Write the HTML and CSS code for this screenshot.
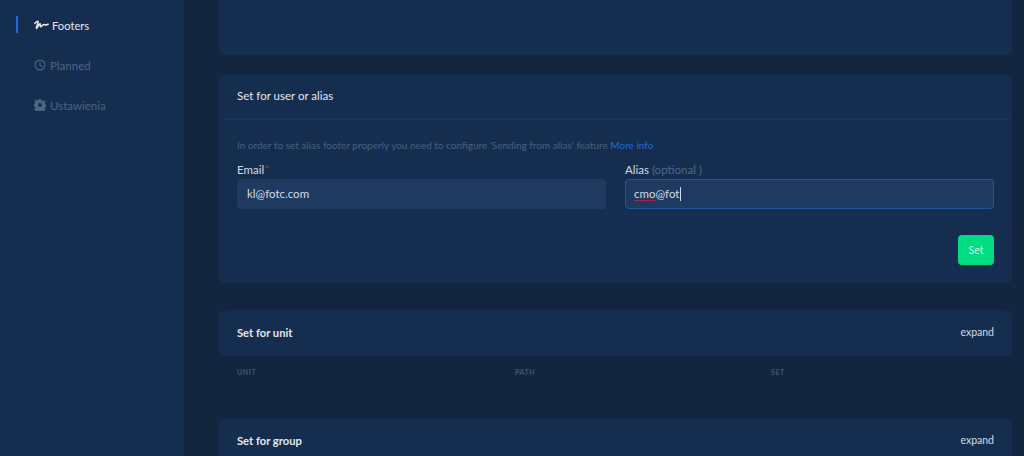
FILE: index.html
```html
<!DOCTYPE html>
<html lang="en">
<head>
<meta charset="utf-8">
<title>Footers</title>
<link rel="stylesheet" href="styles.css">
</head>
<body>
<aside class="sidebar">
  <nav class="nav">
    <a class="nav-item active">
      <svg class="icon squiggle" viewBox="0 0 16 10" width="15" height="10"><path d="M1 3.2C2.2 1.4 4 .8 4.4 1.5 4.9 2.4 2.2 6.8 2.6 8.6 3.6 8.6 5.2 3.8 6.4 3.6 7.2 3.6 6.2 6.6 7 6.9 8.2 7.2 9 4.2 10.4 4.4 11.6 4.6 12.6 5.6 15 4.2" fill="none" stroke="currentColor" stroke-width="1.7" stroke-linecap="round" stroke-linejoin="round"/></svg>
      <span>Footers</span>
    </a>
    <a class="nav-item">
      <svg class="icon" viewBox="0 0 12 12" width="12" height="12"><circle cx="6" cy="6" r="4.9" fill="none" stroke="currentColor" stroke-width="1.2"/><path d="M6 3v3.2l2.1 1.2" fill="none" stroke="currentColor" stroke-width="1.1" stroke-linecap="round"/></svg>
      <span>Planned</span>
    </a>
    <a class="nav-item">
      <svg class="icon" viewBox="0 0 24 24" width="12" height="12"><path fill="currentColor" fill-rule="evenodd" d="M9.6 0h4.8l.7 3.4 1.9.8 2.9-1.9 3.4 3.4-1.9 2.9.8 1.9 3.3.7v4.6l-3.3.7-.8 1.9 1.9 2.9-3.4 3.4-2.9-1.9-1.9.8-.7 3.3H9.6l-.7-3.3-1.9-.8-2.9 1.9-3.4-3.4L2.6 17l-.8-1.9-1.8-.4V9.3l1.8-.4.8-1.9-1.9-2.9L4.1 1l2.9 1.9 1.9-.8zM12 8a4 4 0 1 0 0 8 4 4 0 0 0 0-8z"/></svg>
      <span>Ustawienia</span>
    </a>
  </nav>
</aside>
<main class="main">
  <section class="card card-top"></section>
  <section class="card card-form">
    <header class="card-head bordered"><h2>Set for user or alias</h2></header>
    <div class="card-body">
      <p class="hint">In order to set alias footer properly you need to configure 'Sending from alias' feature <a class="link">More info</a></p>
      <div class="fields">
        <div class="field">
          <label>Email<span class="req">*</span></label>
          <div class="input">kl@fotc.com</div>
        </div>
        <div class="field">
          <label>Alias <span class="opt">(optional )</span></label>
          <div class="input focus"><span class="typo">cmo</span>@fot<span class="caret"></span></div>
        </div>
      </div>
      <div class="actions"><button class="btn">Set</button></div>
    </div>
  </section>
  <section class="card card-collapsed">
    <header class="card-head"><h2>Set for unit</h2><a class="expand">expand</a></header>
  </section>
  <div class="table-head"><span class="col-unit">UNIT</span><span class="col-path">PATH</span><span>SET</span></div>
  <section class="card card-collapsed">
    <header class="card-head"><h2>Set for group</h2><a class="expand">expand</a></header>
  </section>
</main>
</body>
</html>
```
FILE: styles.css
```css
* { box-sizing: border-box; }
html, body { margin: 0; height: 100%; }
body {
  display: flex;
  height: 456px;
  overflow: hidden;
  background: #132640;
  font-family: "Lato", "Liberation Sans", sans-serif;
  font-size: 11.5px;
  color: #d5dbe5;
}
.sidebar { width: 184px; flex: none; background: #152e50; }
.nav { display: flex; flex-direction: column; padding-top: 5px; }
.nav-item {
  display: flex;
  align-items: center;
  gap: 4px;
  height: 40px;
  padding-left: 34px;
  color: #4a6484;
}
.nav-item .icon { flex: none; }
.nav-item.active { color: #e3e8ef; position: relative; gap: 3px; font-size: 11.2px; }
.nav-item.active::before {
  content: "";
  position: absolute;
  left: 16px;
  top: 11px;
  width: 2px;
  height: 17px;
  background: #2269d3;
}
.main { flex: 1; min-width: 0; padding: 0 12px 0 35px; display: flex; flex-direction: column; }
.card { background: #152e50; border-radius: 6px; flex: none; }
.card-top { height: 55px; border-radius: 0 0 6px 6px; margin-bottom: 19px; }
.card-form { height: 209px; margin-bottom: 27px; }
.card-head {
  height: 46px;
  padding: 0 18px 2px;
  display: flex;
  align-items: center;
  justify-content: space-between;
}
.card-head.bordered { border-bottom: 1px solid #18345a; }
h2 { margin: 0; font-size: 11.5px; font-weight: 400; color: #e3e8ef; }
.card-collapsed h2 { font-weight: 700; font-size: 11.2px; }
.expand { font-size: 10.5px; color: #d5dbe5; }
.card-body { padding: 19px 18px 0; }
.hint { margin: 0; height: 13px; line-height: 13px; font-size: 10px; color: #47607f; }
.link { color: #2269d3; }
.fields { display: flex; gap: 19px; margin-top: 12px; }
.field { flex: 1; min-width: 0; }
label { display: block; height: 15px; line-height: 12px; font-size: 11.5px; color: #d5dbe5; }
.req { color: #b3264a; }
.opt { color: #4f6788; }
.input {
  height: 30px;
  padding: 0 10px 1px;
  border-radius: 4px;
  background: #1e3a60;
  display: flex;
  align-items: center;
  color: #d5dbe5;
}
.input.focus { border: 1px solid #23579c; padding: 0 8px 1px; }
.typo { text-decoration: underline solid #a3264a 1px; text-underline-offset: 2px; }
.caret { width: 1px; height: 14px; background: #d5dbe5; }
.actions { display: flex; justify-content: flex-end; margin-top: 26px; }
.btn {
  width: 36px;
  height: 30px;
  padding: 0;
  border: 0;
  border-radius: 4px;
  background: #00dc82;
  color: #d7f8ea;
  font: inherit;
  font-size: 10.5px;
}
.table-head {
  height: 62px;
  flex: none;
  padding: 12px 18px 0;
  display: flex;
  font-size: 7px;
  line-height: 9px;
  font-weight: 700;
  letter-spacing: .6px;
  color: #42597a;
}
.col-unit { width: 278px; }
.col-path { width: 256px; }
```
